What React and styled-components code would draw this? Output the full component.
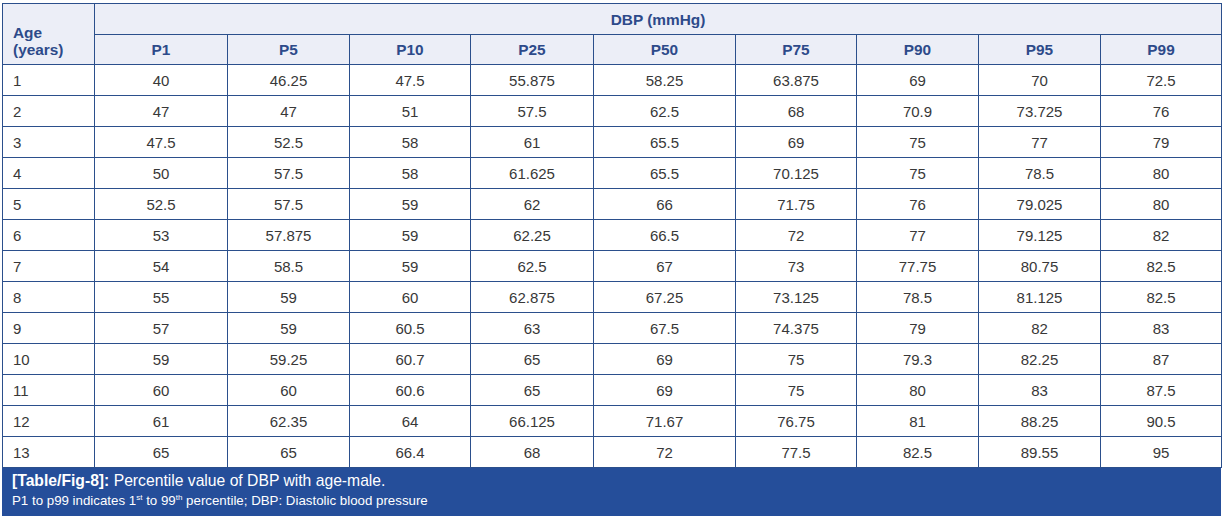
import React from 'react';
import styled, { createGlobalStyle } from 'styled-components';

const GlobalStyle = createGlobalStyle`
  html, body {
    margin: 0;
    padding: 0;
    background: #ffffff;
  }
  body {
    font-family: "Liberation Sans", Arial, sans-serif;
  }
`

const Page = styled.div`
  padding: 3px 2px 0 2px;
  width: 1219px;
`

const Table = styled.table`
  width: 1219px;
  border-collapse: collapse;
  table-layout: fixed;
  font-size: 15px;
`

const HeadCell = styled.th`
  background: #eceef7;
  color: #2d4a8a;
  font-weight: bold;
  font-size: 15.4px;
  border: 1px solid #2b4f8c;
  text-align: ${p => (p.left ? 'left' : 'center')};
  padding: ${p => (p.left ? '0 10px' : '0')};
  height: ${p => p.h || 29}px;
  line-height: 17px;
  vertical-align: ${p => (p.left ? 'bottom' : 'middle')};
  padding-bottom: ${p => (p.left ? '6px' : '0')};
`

const Cell = styled.td`
  color: #383838;
  border: 1px solid #2b4f8c;
  text-align: ${p => (p.left ? 'left' : 'center')};
  padding: ${p => (p.left ? '0 10px' : '0')};
  height: 30px;
`

const Caption = styled.div`
  background: #254e9a;
  color: #ffffff;
  height: 48px;
  box-sizing: border-box;
  padding: 3px 10px 0 10px;
`

const CaptionTitle = styled.div`
  font-size: 15.7px;
  line-height: 20px;
  b {
    font-weight: bold;
  }
`

const CaptionNote = styled.div`
  font-size: 13.3px;
  line-height: 19px;
  sup {
    font-size: 8px;
    vertical-align: 5px;
    line-height: 0;
  }
`

const widths = [92, 133, 122, 121, 123, 142, 121, 122, 122, 121];
const labels = ['P1', 'P5', 'P10', 'P25', 'P50', 'P75', 'P90', 'P95', 'P99'];

const rows = [
  ['1', '40', '46.25', '47.5', '55.875', '58.25', '63.875', '69', '70', '72.5'],
  ['2', '47', '47', '51', '57.5', '62.5', '68', '70.9', '73.725', '76'],
  ['3', '47.5', '52.5', '58', '61', '65.5', '69', '75', '77', '79'],
  ['4', '50', '57.5', '58', '61.625', '65.5', '70.125', '75', '78.5', '80'],
  ['5', '52.5', '57.5', '59', '62', '66', '71.75', '76', '79.025', '80'],
  ['6', '53', '57.875', '59', '62.25', '66.5', '72', '77', '79.125', '82'],
  ['7', '54', '58.5', '59', '62.5', '67', '73', '77.75', '80.75', '82.5'],
  ['8', '55', '59', '60', '62.875', '67.25', '73.125', '78.5', '81.125', '82.5'],
  ['9', '57', '59', '60.5', '63', '67.5', '74.375', '79', '82', '83'],
  ['10', '59', '59.25', '60.7', '65', '69', '75', '79.3', '82.25', '87'],
  ['11', '60', '60', '60.6', '65', '69', '75', '80', '83', '87.5'],
  ['12', '61', '62.35', '64', '66.125', '71.67', '76.75', '81', '88.25', '90.5'],
  ['13', '65', '65', '66.4', '68', '72', '77.5', '82.5', '89.55', '95'],
];

export default function App() {
  return (
    <Page>
      <GlobalStyle />
      <Table>
        <colgroup>
          {widths.map((w, i) => (
            <col key={i} style={{ width: w }} />
          ))}
        </colgroup>
        <thead>
          <tr>
            <HeadCell left rowSpan={2}>Age<br />(years)</HeadCell>
            <HeadCell colSpan={9} h={30}>DBP (mmHg)</HeadCell>
          </tr>
          <tr>
            {labels.map(l => (
              <HeadCell key={l}>{l}</HeadCell>
            ))}
          </tr>
        </thead>
        <tbody>
          {rows.map(r => (
            <tr key={r[0]}>
              {r.map((v, i) => (
                <Cell key={i} left={i === 0}>{v}</Cell>
              ))}
            </tr>
          ))}
        </tbody>
      </Table>
      <Caption>
        <CaptionTitle><b>[Table/Fig-8]:</b> Percentile value of DBP with age-male.</CaptionTitle>
        <CaptionNote>P1 to p99 indicates 1<sup>st</sup> to 99<sup>th</sup> percentile; DBP: Diastolic blood pressure</CaptionNote>
      </Caption>
    </Page>
  );
}
